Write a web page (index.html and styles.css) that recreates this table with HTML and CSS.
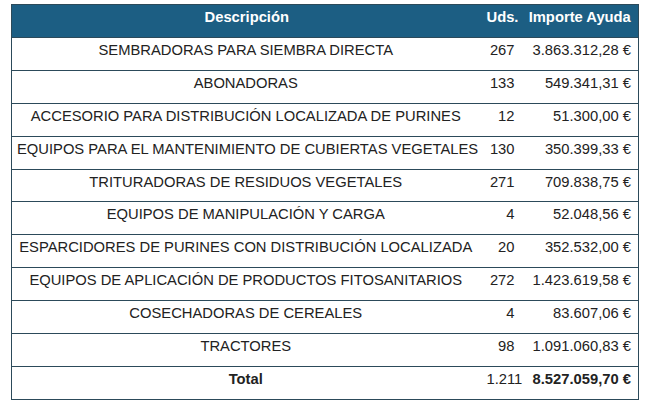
FILE: index.html
```html
<!DOCTYPE html>
<html lang="es">
<head>
<meta charset="utf-8">
<link rel="stylesheet" href="styles.css">
</head>
<body>
<table class="ayudas">
  <colgroup>
    <col class="c-desc">
    <col class="c-uds">
    <col class="c-imp">
  </colgroup>
  <thead>
    <tr>
      <th>Descripción</th>
      <th>Uds.</th>
      <th>Importe Ayuda</th>
    </tr>
  </thead>
  <tbody>
    <tr><td class="desc">SEMBRADORAS PARA SIEMBRA DIRECTA</td><td class="num">267</td><td class="num">3.863.312,28 €</td></tr>
    <tr><td class="desc">ABONADORAS</td><td class="num">133</td><td class="num">549.341,31 €</td></tr>
    <tr><td class="desc">ACCESORIO PARA DISTRIBUCIÓN LOCALIZADA DE PURINES</td><td class="num">12</td><td class="num">51.300,00 €</td></tr>
    <tr><td class="desc">EQUIPOS PARA EL MANTENIMIENTO DE CUBIERTAS VEGETALES</td><td class="num">130</td><td class="num">350.399,33 €</td></tr>
    <tr><td class="desc">TRITURADORAS DE RESIDUOS VEGETALES</td><td class="num">271</td><td class="num">709.838,75 €</td></tr>
    <tr><td class="desc">EQUIPOS DE MANIPULACIÓN Y CARGA</td><td class="num">4</td><td class="num">52.048,56 €</td></tr>
    <tr><td class="desc">ESPARCIDORES DE PURINES CON DISTRIBUCIÓN LOCALIZADA</td><td class="num">20</td><td class="num">352.532,00 €</td></tr>
    <tr><td class="desc">EQUIPOS DE APLICACIÓN DE PRODUCTOS FITOSANITARIOS</td><td class="num">272</td><td class="num">1.423.619,58 €</td></tr>
    <tr><td class="desc">COSECHADORAS DE CEREALES</td><td class="num">4</td><td class="num">83.607,06 €</td></tr>
    <tr><td class="desc">TRACTORES</td><td class="num">98</td><td class="num">1.091.060,83 €</td></tr>
    <tr class="total"><td class="desc strong">Total</td><td class="num wide">1.211</td><td class="num strong">8.527.059,70 €</td></tr>
  </tbody>
</table>
</body>
</html>
```
FILE: styles.css
```css
html, body {
  margin: 0;
  background: #ffffff;
}
body {
  padding: 4px 0 0 11px;
  font-family: "Liberation Sans", Arial, sans-serif;
  font-size: 14.75px;
  color: #222222;
}
.ayudas {
  border-collapse: collapse;
  table-layout: fixed;
  width: 627px;
  border: 1px solid #2c4a5a;
}
.c-desc { width: 470px; }
.c-uds { width: 40px; }
.c-imp { width: 117px; }
.ayudas th,
.ayudas td {
  line-height: 16.9px;
  padding: 4px 7px 11px 5px;
  white-space: nowrap;
}
.ayudas th {
  background: #1c5e83;
  color: #ffffff;
  font-weight: bold;
  text-align: center;
  padding-right: 5px;
}
.ayudas td {
  border-top: 1px solid #2c4a5a;
}
.desc { text-align: center; }
.num { text-align: right; }
.wide { text-align: left; }
.strong { font-weight: bold; }
```
